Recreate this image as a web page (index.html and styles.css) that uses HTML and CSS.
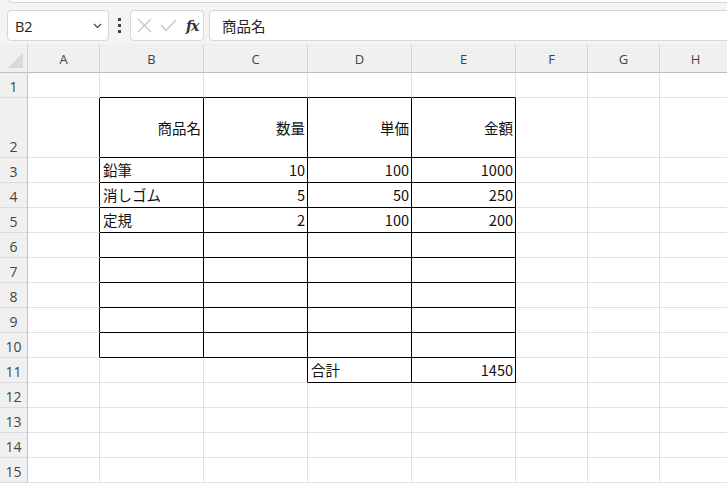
FILE: index.html
```html
<!DOCTYPE html>
<html lang="ja">
<head>
  <meta charset="UTF-8">
  <title>Book1</title>
  <link rel="stylesheet" href="styles.css">
</head>
<body>
  <div class="toolbar">
    <div class="ribbonEdge"></div>
    <div class="formulaRow">
      <div class="nameBox">
        <span>B2</span>
        <svg width="9" height="6" viewBox="0 0 9 6"><path d="M1 1 L4.5 4.5 L8 1" fill="none" stroke="#444" stroke-width="1.2"/></svg>
      </div>
      <div class="dots">
        <i></i><i></i><i></i>
      </div>
      <div class="fxBox">
        <svg width="15" height="15" viewBox="0 0 15 15"><path d="M1 1 L14 14 M14 1 L1 14" stroke="#c4c4c4" stroke-width="1.2"/></svg>
        <svg width="17" height="13" viewBox="0 0 17 13"><path d="M1 6 L6 11.5 L16 1" fill="none" stroke="#c4c4c4" stroke-width="1.2"/></svg>
        <span class="fx">fx</span>
      </div>
      <div class="formulaInput">商品名</div>
    </div>
  </div>

  <div class="sheet">
    <div class="corner"><div class="tri"></div></div>
    <div class="colHead">A</div>
    <div class="colHead">B</div>
    <div class="colHead">C</div>
    <div class="colHead">D</div>
    <div class="colHead">E</div>
    <div class="colHead">F</div>
    <div class="colHead">G</div>
    <div class="colHead">H</div>

    <!-- row 1 -->
    <div class="rowHead">1</div>
    <div class="cell"></div>
    <div class="cell bt"></div>
    <div class="cell bt"></div>
    <div class="cell bt"></div>
    <div class="cell bt"></div>
    <div class="cell"></div>
    <div class="cell"></div>
    <div class="cell"></div>

    <!-- row 2 -->
    <div class="rowHead">2</div>
    <div class="cell bl"></div>
    <div class="cell bd num mid">商品名</div>
    <div class="cell bd num mid">数量</div>
    <div class="cell bd num mid">単価</div>
    <div class="cell bd num mid">金額</div>
    <div class="cell"></div>
    <div class="cell"></div>
    <div class="cell"></div>

    <!-- row 3 -->
    <div class="rowHead">3</div>
    <div class="cell bl"></div>
    <div class="cell bd">鉛筆</div>
    <div class="cell bd num">10</div>
    <div class="cell bd num">100</div>
    <div class="cell bd num">1000</div>
    <div class="cell"></div>
    <div class="cell"></div>
    <div class="cell"></div>

    <!-- row 4 -->
    <div class="rowHead">4</div>
    <div class="cell bl"></div>
    <div class="cell bd">消しゴム</div>
    <div class="cell bd num">5</div>
    <div class="cell bd num">50</div>
    <div class="cell bd num">250</div>
    <div class="cell"></div>
    <div class="cell"></div>
    <div class="cell"></div>

    <!-- row 5 -->
    <div class="rowHead">5</div>
    <div class="cell bl"></div>
    <div class="cell bd">定規</div>
    <div class="cell bd num">2</div>
    <div class="cell bd num">100</div>
    <div class="cell bd num">200</div>
    <div class="cell"></div>
    <div class="cell"></div>
    <div class="cell"></div>

    <!-- rows 6-10 -->
    <div class="rowHead">6</div>
    <div class="cell bl"></div>
    <div class="cell bd"></div>
    <div class="cell bd"></div>
    <div class="cell bd"></div>
    <div class="cell bd"></div>
    <div class="cell"></div>
    <div class="cell"></div>
    <div class="cell"></div>

    <div class="rowHead">7</div>
    <div class="cell bl"></div>
    <div class="cell bd"></div>
    <div class="cell bd"></div>
    <div class="cell bd"></div>
    <div class="cell bd"></div>
    <div class="cell"></div>
    <div class="cell"></div>
    <div class="cell"></div>

    <div class="rowHead">8</div>
    <div class="cell bl"></div>
    <div class="cell bd"></div>
    <div class="cell bd"></div>
    <div class="cell bd"></div>
    <div class="cell bd"></div>
    <div class="cell"></div>
    <div class="cell"></div>
    <div class="cell"></div>

    <div class="rowHead">9</div>
    <div class="cell bl"></div>
    <div class="cell bd"></div>
    <div class="cell bd"></div>
    <div class="cell bd"></div>
    <div class="cell bd"></div>
    <div class="cell"></div>
    <div class="cell"></div>
    <div class="cell"></div>

    <div class="rowHead">10</div>
    <div class="cell bl"></div>
    <div class="cell bd"></div>
    <div class="cell bd"></div>
    <div class="cell bd"></div>
    <div class="cell bd"></div>
    <div class="cell"></div>
    <div class="cell"></div>
    <div class="cell"></div>

    <!-- row 11 -->
    <div class="rowHead">11</div>
    <div class="cell"></div>
    <div class="cell"></div>
    <div class="cell bl"></div>
    <div class="cell bd">合計</div>
    <div class="cell bd num">1450</div>
    <div class="cell"></div>
    <div class="cell"></div>
    <div class="cell"></div>

    <!-- rows 12-15 -->
    <div class="rowHead">12</div>
    <div class="cell"></div><div class="cell"></div><div class="cell"></div><div class="cell"></div>
    <div class="cell"></div><div class="cell"></div><div class="cell"></div><div class="cell"></div>

    <div class="rowHead">13</div>
    <div class="cell"></div><div class="cell"></div><div class="cell"></div><div class="cell"></div>
    <div class="cell"></div><div class="cell"></div><div class="cell"></div><div class="cell"></div>

    <div class="rowHead">14</div>
    <div class="cell"></div><div class="cell"></div><div class="cell"></div><div class="cell"></div>
    <div class="cell"></div><div class="cell"></div><div class="cell"></div><div class="cell"></div>

    <div class="rowHead">15</div>
    <div class="cell"></div><div class="cell"></div><div class="cell"></div><div class="cell"></div>
    <div class="cell"></div><div class="cell"></div><div class="cell"></div><div class="cell"></div>
  </div>
</body>
</html>
```

FILE: styles.css
```css
* {
  margin: 0;
  padding: 0;
  box-sizing: border-box;
}
body {
  width: 727px;
  height: 483px;
  overflow: hidden;
  background: #fff;
  font-family: "Noto Sans CJK JP", "Noto Sans", sans-serif;
  color: #111;
}
.toolbar {
  height: 44px;
  background: #f4f4f4;
}
.ribbonEdge {
  height: 3px;
  margin-left: 9px;
  background: #fff;
  border-bottom: 1px solid #d4d4d4;
  border-left: 1px solid #d4d4d4;
  border-bottom-left-radius: 4px;
}
.formulaRow {
  display: flex;
  align-items: center;
  height: 31px;
  margin-top: 7px;
  padding-left: 7px;
}
.nameBox {
  width: 102px;
  height: 31px;
  background: #fff;
  border: 1px solid #d6d6d6;
  border-radius: 4px;
  display: flex;
  align-items: center;
  justify-content: space-between;
  padding: 0 6px 0 7px;
  font-family: "Open Sans", "Noto Sans", sans-serif;
  font-size: 14.5px;
  color: #222;
}
.nameBox span {
  padding-top: 1px;
}
.dots {
  width: 21px;
  display: flex;
  flex-direction: column;
  align-items: center;
  gap: 3px;
}
.dots i {
  display: block;
  width: 3px;
  height: 3px;
  background: #444;
}
.fxBox {
  width: 74px;
  height: 31px;
  background: #fff;
  border: 1px solid #d6d6d6;
  border-radius: 4px;
  display: flex;
  align-items: center;
  padding-left: 6px;
  gap: 8px;
}
.fx {
  font-family: "DejaVu Serif", "Liberation Serif", serif;
  font-style: italic;
  font-weight: bold;
  font-size: 14px;
  color: #333;
  margin-left: 1px;
  letter-spacing: -1px;
}
.formulaInput {
  flex: 1;
  height: 31px;
  margin-left: 5px;
  margin-right: -10px;
  background: #fff;
  border: 1px solid #d6d6d6;
  border-radius: 4px;
  padding-left: 12px;
  font-size: 14.5px;
  line-height: 29px;
  color: #222;
}
.sheet {
  display: grid;
  grid-template-columns: 28px 72px 104px 104px 104px 104px 72px 72px 72px;
  grid-template-rows: 29px 25px 60px repeat(13, 25px);
  width: 756px;
}
.corner {
  background: #f0f0f0;
  border-right: 1px solid #d4d4d4;
  border-bottom: 1px solid #bdbdbd;
  padding: 9px 3px 4px 7px;
}
.tri {
  width: 16px;
  height: 15px;
  background: linear-gradient(to bottom right, transparent 50%, #dadada 50%);
}
.colHead {
  background: #f0f0f0;
  border-right: 1px solid #d6d6d6;
  border-bottom: 1px solid #bdbdbd;
  font-family: "Open Sans", "Noto Sans", sans-serif;
  font-size: 13px;
  color: #444;
  text-align: center;
  line-height: 30px;
}
.rowHead {
  background: #f0f0f0;
  border-right: 1px solid #c2c2c2;
  border-bottom: 1px solid #dcdcdc;
  font-family: "Open Sans", "Noto Sans", sans-serif;
  font-size: 14px;
  color: #444;
  display: flex;
  align-items: flex-end;
  justify-content: center;
  padding-bottom: 1px;
}
.cell {
  border-right: 1px solid #e1e1e1;
  border-bottom: 1px solid #e1e1e1;
  font-size: 14.5px;
  line-height: 18px;
  display: flex;
  align-items: flex-end;
  padding: 0 2px 3px 3px;
  white-space: nowrap;
}
.num {
  justify-content: flex-end;
}
.mid {
  align-items: center;
  padding-bottom: 0;
}
.bd {
  border-right-color: #000;
  border-bottom-color: #000;
}
.bl {
  border-right-color: #000;
}
.bt {
  border-bottom-color: #000;
}
```
